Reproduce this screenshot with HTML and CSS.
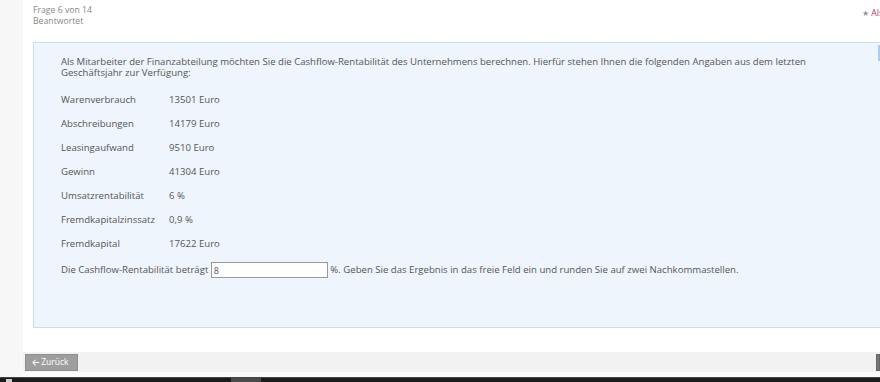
FILE: index.html
```html
<!DOCTYPE html>
<html lang="de">
<head>
    <meta charset="UTF-8">
    <title>Frage 6 von 14</title>
    <link rel="stylesheet" href="styles.css">
</head>
<body>
    <div id="page">
        <div id="sidebar"></div>
        <div id="main">
            <div id="content">
                <div id="question-head">
                    <div id="question-meta">
                        <div>Frage 6 von 14</div>
                        <div>Beantwortet</div>
                    </div>
                    <div id="mark-link"><span class="star">&#9733;</span> Als Favorit markieren</div>
                </div>

                <div id="question-box">
                    <div class="flag-tab"></div>
                    <p class="intro">Als Mitarbeiter der Finanzabteilung möchten Sie die Cashflow-Rentabilität des Unternehmens berechnen. Hierfür stehen Ihnen die folgenden Angaben aus dem letzten Geschäftsjahr zur Verfügung:</p>
                    <div class="data-row"><span class="label">Warenverbrauch</span><span>13501 Euro</span></div>
                    <div class="data-row"><span class="label">Abschreibungen</span><span>14179 Euro</span></div>
                    <div class="data-row"><span class="label">Leasingaufwand</span><span>9510 Euro</span></div>
                    <div class="data-row"><span class="label">Gewinn</span><span>41304 Euro</span></div>
                    <div class="data-row"><span class="label">Umsatzrentabilität</span><span>6 %</span></div>
                    <div class="data-row"><span class="label">Fremdkapitalzinssatz</span><span>0,9 %</span></div>
                    <div class="data-row"><span class="label">Fremdkapital</span><span>17622 Euro</span></div>
                    <div class="answer-row">Die Cashflow-Rentabilität beträgt <input type="text" id="answer" value="8"> %. Geben Sie das Ergebnis in das freie Feld ein und runden Sie auf zwei Nachkommastellen.</div>
                </div>
            </div>

            <div id="nav-bar">
                <button class="nav-btn"><span class="arrow">&#129120;</span> Zurück</button>
                <button class="nav-btn next"></button>
            </div>
            <div id="nav-gap"></div>
        </div>
    </div>
    <div id="taskbar">
        <span class="tray-icon"></span>
        <span class="task-item"></span>
    </div>
</body>
</html>
```

FILE: styles.css
```css
body {
    margin: 0;
    height: 382px;
    overflow: hidden;
    font-family: "Open Sans", Arial, sans-serif;
    font-size: 9.6px;
    line-height: 11px;
    color: #555;
    background-color: #fff;
}

#page {
    display: flex;
    height: 377px;
}

#sidebar {
    width: 23px;
    background-color: #f7f7f7;
}

#main {
    flex: 1;
    display: flex;
    flex-direction: column;
    overflow: hidden;
}

#content {
    flex: 1;
    padding: 0 0 0 10px;
}

#question-head {
    display: flex;
    justify-content: space-between;
    height: 42px;
    padding-top: 5px;
    box-sizing: border-box;
    color: #888;
    font-size: 8.7px;
}

#mark-link {
    flex-shrink: 0;
    width: 18px;
    margin-top: 2px;
    color: #b33a5e;
    white-space: nowrap;
}

#mark-link .star {
    color: #999;
    font-size: 8px;
}

#question-box {
    position: relative;
    box-sizing: border-box;
    height: 286px;
    margin-right: -10px;
    padding: 13px 0 0 27px;
    background-color: #eef5fd;
    border: 1px solid #cbdcec;
}

.flag-tab {
    position: absolute;
    top: 2px;
    right: 7px;
    width: 4px;
    height: 16px;
    background-color: #a9cdf0;
}

.intro {
    margin: 0 0 16px 0;
    padding-right: 60px;
}

.data-row {
    display: flex;
    margin-bottom: 13px;
}

.data-row .label {
    width: 108px;
}

.answer-row {
    margin-top: 2px;
    line-height: 16px;
}

#answer {
    box-sizing: border-box;
    width: 117px;
    height: 16px;
    margin: 0;
    padding: 0 2px;
    vertical-align: top;
    border: 1px solid #999;
    font-family: "Open Sans", Arial, sans-serif;
    font-size: 9px;
    color: #555;
}

#nav-bar {
    display: flex;
    justify-content: space-between;
    height: 20px;
    padding: 2px 0 0 2px;
    box-sizing: border-box;
    background-color: #f2f2f2;
}

.nav-btn {
    width: 53px;
    height: 17px;
    padding: 0 0 0 6px;
    text-align: left;
    border: 1px solid #8e8e8e;
    background-color: #9e9e9e;
    color: #fff;
    font-family: "Open Sans", Arial, sans-serif;
    font-size: 8.5px;
}

.nav-btn .arrow {
    font-family: "DejaVu Sans", sans-serif;
    font-weight: bold;
}

.nav-btn.next {
    width: 4px;
    padding: 0;
    background-color: #777;
    border-color: #666;
}

#nav-gap {
    height: 5px;
    background-color: #fafafa;
}

#taskbar {
    display: flex;
    align-items: center;
    height: 5px;
    background-color: #1b1b1b;
    border-top: 1px solid #444;
}

.tray-icon {
    width: 6px;
    height: 4px;
    margin-left: 6px;
    background-color: #ccc;
}

.task-item {
    width: 30px;
    height: 5px;
    margin-left: 219px;
    background-color: #4a4a4a;
}
```
